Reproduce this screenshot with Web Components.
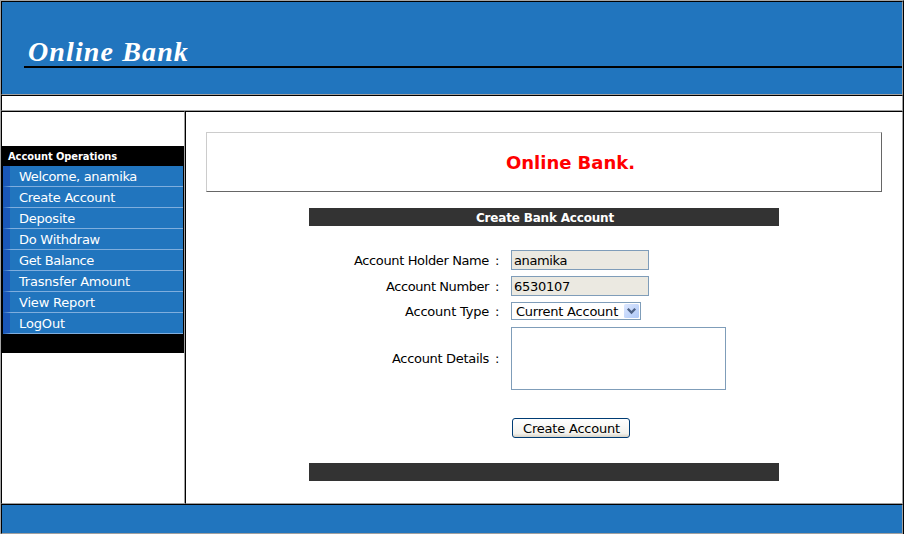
<!DOCTYPE html>
<html lang="en"><head><meta charset="utf-8"><title>Online Bank</title>
<style>
html,body{margin:0;height:534px;overflow:hidden;background:#fff}
body{font:13px/16px "DejaVu Sans",sans-serif;color:#000}
</style></head><body>
<bank-page></bank-page>
<script>
const define=(name,html,ready)=>{
  const t=document.createElement('template');t.innerHTML=html;
  customElements.define(name,class extends HTMLElement{
    constructor(){super();this.attachShadow({mode:'open'}).append(t.content.cloneNode(true));}
    connectedCallback(){if(ready)ready(this,this.shadowRoot);}
  });
};
// Text spaced evenly to occupy the width given in the "w" attribute.
define('fit-text','<style>:host{display:inline-block;white-space:pre}span{display:inline-block}</style><span></span>',(el,r)=>{
  const s=r.querySelector('span'),w=+el.getAttribute('w');
  s.textContent=el.textContent;
  s.style.letterSpacing=(w-s.getBoundingClientRect().width)/s.textContent.length+'px';
  el.style.width=w+'px';
});
define('bank-header',`<style>:host{display:block;box-sizing:border-box;height:92px;background:#2175be;padding:34px 0 0 22px}
div{height:30px;border-bottom:2px solid #000;padding-left:4px;color:#fff;font:italic bold 28px/32px "Liberation Serif",serif}</style>
<div><fit-text w="161">Online Bank</fit-text></div>`);
define('menu-item',`<style>:host{display:block;height:21px;background:linear-gradient(90deg,#1a57b8 7px,#2175be 7px)}
:host::after{content:"";display:block;height:1px;background:linear-gradient(90deg,#1f5fbb,#7faede 8px,#7faede)}
div{height:20px;padding-left:16px;color:#fff;line-height:21px;box-sizing:border-box}</style><div><slot></slot></div>`);
define('bank-menu',`<style>:host{display:block;background:#000;margin-top:34px;padding:0 1px 19px}
header{height:20px;padding-left:5px;color:#fff;font:bold 11px/21px "DejaVu Sans Condensed","DejaVu Sans",sans-serif}</style>
<header><fit-text w="109">Account Operations</fit-text></header>
<menu-item><fit-text w="118">Welcome, anamika</fit-text></menu-item>
<menu-item><fit-text w="96">Create Account</fit-text></menu-item>
<menu-item><fit-text w="56">Deposite</fit-text></menu-item>
<menu-item><fit-text w="81">Do Withdraw</fit-text></menu-item>
<menu-item><fit-text w="75">Get Balance</fit-text></menu-item>
<menu-item><fit-text w="111">Trasnsfer Amount</fit-text></menu-item>
<menu-item><fit-text w="76">View Report</fit-text></menu-item>
<menu-item><fit-text w="46">LogOut</fit-text></menu-item>`);
define('page-title',`<style>:host{display:block;box-sizing:border-box;width:676px;height:60px;border:1px solid;border-color:#ccc #666 #666 #ccc;padding-left:299px;color:#f00;font:bold 18px/59px "DejaVu Sans",sans-serif}</style><fit-text w="129">Online Bank.</fit-text>`);
define('form-bar',`<style>:host{display:block;box-sizing:border-box;height:18px;background:#333;color:#fff;padding-left:167px;font:bold 12px/20px "DejaVu Sans",sans-serif}</style><slot></slot>`);
define('form-row',`<style>:host{display:grid;grid-template-columns:180px 22px auto;align-items:center}
.l{text-align:right;line-height:16px}.c{padding-left:6px;line-height:16px}
:host([lower]) .l,:host([lower]) .c{padding-top:2px}</style><div class="l"><slot name="label"></slot></div><div class="c">:</div><slot></slot>`);
define('text-field',`<style>:host{display:block;box-sizing:border-box;width:138px;height:20px;border:1px solid #7f9db9;background:#ebe9e1;padding-left:2px;line-height:19px}</style><slot></slot>`);
define('select-field',`<style>:host{display:flex;justify-content:space-between;box-sizing:border-box;width:130px;height:18px;border:1px solid #7f9db9;background:#fff;padding:1px 1px 1px 4px;line-height:15px}
svg{display:block}</style><slot></slot>
<svg width="15" height="14"><defs><linearGradient id="g" x2="1" y2="1"><stop stop-color="#dce7ff"/><stop offset="1" stop-color="#aec8f7"/></linearGradient></defs><rect width="15" height="14" rx="1.5" fill="url(#g)"/><path d="M3.8 4.8L7.5 8.5L11.2 4.8" fill="none" stroke="#4d6185" stroke-width="2.3"/></svg>`);
define('area-field',`<style>:host{display:block;box-sizing:border-box;width:215px;height:63px;border:1px solid #7f9db9}</style>`);
define('push-button',`<style>:host{display:block;box-sizing:border-box;width:118px;height:20px;border:1px solid #003c74;border-radius:3px;background:linear-gradient(#fff,#f3f2ed 80%,#d8d2c5);padding-left:10px;line-height:19px}</style><slot></slot>`);
define('account-form',`<style>:host{display:block;width:470px;margin:16px 0 0 103px}
.rows{display:grid;grid-template-rows:26px 26px 25px 63px;align-items:start;padding-top:24px}
push-button{margin:28px 0 25px 203px}</style>
<form-bar><fit-text w="138">Create Bank Account</fit-text></form-bar>
<div class="rows">
<form-row lower><fit-text slot="label" w="135">Account Holder Name</fit-text><text-field><fit-text w="53">anamika</fit-text></text-field></form-row>
<form-row lower><fit-text slot="label" w="103">Account Number</fit-text><text-field><fit-text w="56">6530107</fit-text></text-field></form-row>
<form-row lower><fit-text slot="label" w="84">Account Type</fit-text><select-field><fit-text w="102">Current Account</fit-text></select-field></form-row>
<form-row><fit-text slot="label" w="97">Account Details</fit-text><area-field></area-field></form-row>
</div>
<push-button><fit-text w="97">Create Account</fit-text></push-button>
<form-bar></form-bar>`);
define('bank-page',`<style>:host{display:grid;width:904px;height:534px;box-sizing:border-box;grid-template-rows:94px 16px 393px 30px;background:#fff;border-top:1px solid #a5a5a5;border-left:1px solid #a5a5a5;border-right:1px solid #000}
section{box-sizing:border-box;border:1px solid;border-color:#000 #a0a0a0 #a0a0a0 #000;min-width:0}
.mid{display:grid;grid-template-columns:184px 718px;min-height:0}
.mid section{height:393px}
main{padding:20px 0 0 20px;display:block}.foot{background:#2175be}</style>
<section><bank-header></bank-header></section><section></section>
<div class="mid"><section><bank-menu></bank-menu></section><section><main><page-title></page-title><account-form></account-form></main></section></div>
<section class="foot"></section>`);
</script></body></html>
